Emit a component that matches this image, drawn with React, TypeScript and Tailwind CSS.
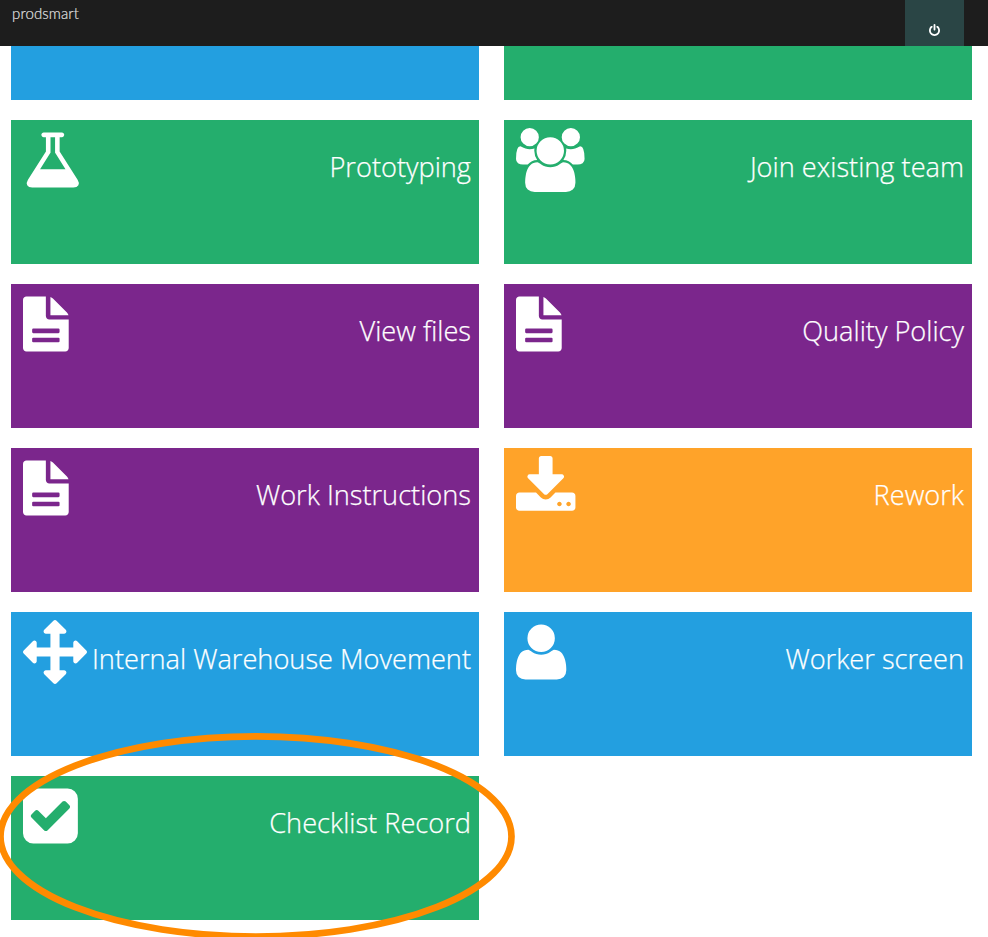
import React from "react";

type IconDef = { viewBox: string; className: string; d: string };

// Glyphs are drawn on a grid of 28 units to the pixel.
const icons: Record<string, IconDef> = {
  flask: {
    viewBox: "118 112 1568 1568",
    className: "mt-3 h-14 w-14 ml-[14px]",
    d: "M1591 1448q56 89 21.5 152.5t-140.5 63.5h-1152q-106 0-140.5-63.5t21.5-152.5l503-793v-399h-64q-26 0-45-19t-19-45 19-45 45-19h512q26 0 45 19t19 45-19 45-45 19h-64v399zm-779-725l-272 429h712l-272-429-20-31v-436h-128v436z",
  },
  users: {
    viewBox: "-64 0 1932 1792",
    className: "mt-2 h-16 w-[69px] ml-3",
    d: "M529 896q-162 5-265 128h-134q-82 0-138-40.5t-56-118.5q0-353 124-353 6 0 43.5 21t97.5 42.5 119 21.5q67 0 133-23-5 37-5 66 0 139 81 256zm1071 637q0 120-73 189.5t-194 69.5h-874q-121 0-194-69.5t-73-189.5q0-53 3.5-103.5t14-109 26.5-108.5 43-97.5 62-81 85.5-53.5 111.5-20q10 0 43 21.5t73 48 107 48 135 21.5 135-21.5 107-48 73-48 43-21.5q61 0 111.5 20t85.5 53.5 62 81 43 97.5 26.5 108.5 14 109 3.5 103.5zm-1024-1277q0 106-75 181t-181 75-181-75-75-181 75-181 181-75 181 75 75 181zm704 384q0 159-112.5 271.5t-271.5 112.5-271.5-112.5-112.5-271.5 112.5-271.5 271.5-112.5 271.5 112.5 112.5 271.5zm576 225q0 78-56 118.5t-138 40.5h-134q-103-123-265-128 81-117 81-256 0-29-5-66 66 23 133 23 59 0 119-21.5t97.5-42.5 43.5-21q124 0 124 353zm-128-609q0 106-75 181t-181 75-181-75-75-181 75-181 181-75 181 75 75 181z",
  },
  file: {
    viewBox: "0 -16 1288 1568",
    className: "mt-3 h-14 w-[46px] ml-3",
    d: "M96 0H640V544q0 40 28 68t68 28H1280V1440q0 40-28 68t-68 28H96q-40 0-68-28t-28-68V96q0-40 28-68t68-28zM288 896q-32 0-32 32v64q0 32 32 32h704q32 0 32-32v-64q0-32-32-32zM288 1152q-32 0-32 32v64q0 32 32 32h704q32 0 32-32v-64q0-32-32-32zM768 10q42 14 70 42l392 392q28 28 45 76H768z",
  },
  download: {
    viewBox: "64 0 1680 1568",
    className: "mt-2 h-14 w-[60px] ml-3",
    d: "M1344 1344q0-26-19-45t-45-19-45 19-19 45 19 45 45 19 45-19 19-45zm256 0q0-26-19-45t-45-19-45 19-19 45 19 45 45 19 45-19 19-45zm128-224v320q0 40-28 68t-68 28h-1472q-40 0-68-28t-28-68v-320q0-40 28-68t68-28h465l135 136q58 56 136 56t136-56l136-136h464q40 0 68 28t28 68zm-325-569q17 41-14 70l-448 448q-18 19-45 19t-45-19l-448-448q-31-29-14-70 17-39 59-39h256v-448q0-26 19-45t45-19h256q26 0 45 19t19 45v448h256q42 0 59 39z",
  },
  move: {
    viewBox: "0 0 1792 1792",
    className: "mt-2 h-16 w-16 ml-3",
    d: "M1792 896q0 26-19 45l-256 256q-19 19-45 19t-45-19-19-45v-128h-384v384h128q26 0 45 19t19 45-19 45l-256 256q-19 19-45 19t-45-19l-256-256q-19-19-19-45t19-45 45-19h128v-384h-384v128q0 26-19 45t-45 19-45-19l-256-256q-19-19-19-45t19-45l256-256q19-19 45-19t45 19 19 45v128h384v-384h-128q-26 0-45-19t-19-45 19-45l256-256q19-19 45-19t45 19l256 256q19 19 19 45t-19 45-45 19h-128v384h384v-128q0-26 19-45t45-19 45 19l256 256q19 19 19 45z",
  },
  user: {
    viewBox: "192 112 1428 1568",
    className: "mt-3 h-14 w-[51px] ml-3",
    d: "M1600 1405q0 120-73 189.5t-194 69.5h-874q-121 0-194-69.5t-73-189.5q0-53 3.5-103.5t14-109 26.5-108.5 43-97.5 62-81 85.5-53.5 111.5-20q9 0 42 21.5t74.5 48 108 48 133.5 21.5 133.5-21.5 108-48 74.5-48 42-21.5q61 0 111.5 20t85.5 53.5 62 81 43 97.5 26.5 108.5 14 109 3.5 103.5zm-320-893q0 159-112.5 271.5t-271.5 112.5-271.5-112.5-112.5-271.5 112.5-271.5 271.5-112.5 271.5 112.5 112.5 271.5z",
  },
  check: {
    viewBox: "128 112 1568 1568",
    className: "mt-3 h-14 w-14 ml-3",
    d: "M813 1299l614-614q19-19 19-45t-19-45l-102-102q-19-19-45-19t-45 19l-467 467-211-211q-19-19-45-19t-45 19l-102 102q-19 19-19 45t19 45l358 358q19 19 45 19t45-19zm851-883v960q0 119-84.5 203.5t-203.5 84.5h-960q-119 0-203.5-84.5t-84.5-203.5v-960q0-119 84.5-203.5t203.5-84.5h960q119 0 203.5 84.5t84.5 203.5z",
  },
};

const BLUE = "bg-[#239fe0]";
const GREEN = "bg-[#24ae6d]";
const PURPLE = "bg-[#7b268c]";
const ORANGE = "bg-[#ffa329]";

const tiles: { label: string; icon?: string; color: string }[] = [
  { label: "", color: BLUE },
  { label: "", color: GREEN },
  { label: "Prototyping", icon: "flask", color: GREEN },
  { label: "Join existing team", icon: "users", color: GREEN },
  { label: "View files", icon: "file", color: PURPLE },
  { label: "Quality Policy", icon: "file", color: PURPLE },
  { label: "Work Instructions", icon: "file", color: PURPLE },
  { label: "Rework", icon: "download", color: ORANGE },
  { label: "Internal Warehouse Movement", icon: "move", color: BLUE },
  { label: "Worker screen", icon: "user", color: BLUE },
  { label: "Checklist Record", icon: "check", color: GREEN },
];

function Tile({ label, icon, color }: { label: string; icon?: string; color: string }) {
  if (!icon) return <div className={`h-[54px] ${color}`} />;
  const glyph = icons[icon];
  return (
    <div className={`flex h-36 items-start justify-between pr-2 text-white ${color}`}>
      <svg viewBox={glyph.viewBox} className={`shrink-0 fill-current ${glyph.className}`}>
        <path fillRule="evenodd" d={glyph.d} />
      </svg>
      <span className="mt-[27px] text-[27.2px] leading-10 font-light whitespace-nowrap [-webkit-text-stroke:0.25px_white]">
        {label}
      </span>
    </div>
  );
}

export default function App() {
  return (
    <div className="relative h-[937px] w-[988px] overflow-hidden bg-white font-['Open_Sans','Noto_Sans',sans-serif]">
      <header className="flex h-[46px] justify-between bg-[#1d1d1d] pr-6 pl-3">
        <span className="mt-[3px] font-['Lato',sans-serif] text-[15px] leading-5 font-light tracking-[0.12px] text-[#e6e6e6] [-webkit-text-stroke:0.15px_#e6e6e6]">
          prodsmart
        </span>
        <button className="flex w-[59px] justify-center bg-[#2a4545] pt-6 text-white" aria-label="Log out">
          <svg viewBox="128 0 1536 1664" className="h-3 w-[11px] fill-current">
            <path d="M1664 896q0 156-61 298t-164 245-245 164-298 61-298-61-245-164-164-245-61-298q0-182 80.5-343t226.5-270q43-32 95.5-25t83.5 50q32 42 24.5 94.5t-49.5 84.5q-98 74-151.5 181t-53.5 228q0 104 40.5 198.5t109.5 163.5 163.5 109.5 198.5 40.5 198.5-40.5 163.5-109.5 109.5-163.5 40.5-198.5q0-121-53.5-228t-151.5-181q-42-32-49.5-84.5t24.5-94.5q31-43 84-50t95 25q146 109 226.5 270t80.5 343zm-640-768v640q0 52-38 90t-90 38-90-38-38-90v-640q0-52 38-90t90-38 90 38 38 90z" />
          </svg>
        </button>
      </header>
      <main className="grid grid-cols-[468px_468px] gap-x-[25px] gap-y-5 pl-[11px]">
        {tiles.map((tile, i) => (
          <Tile key={i} {...tile} />
        ))}
      </main>
      <svg viewBox="0 0 520 211" className="pointer-events-none absolute top-[731px] left-[-4px] h-[211px] w-[520px]">
        <ellipse cx="260" cy="105.4" rx="255.5" ry="100.1" fill="none" stroke="#ff8a00" strokeWidth="6.7" />
      </svg>
    </div>
  );
}
